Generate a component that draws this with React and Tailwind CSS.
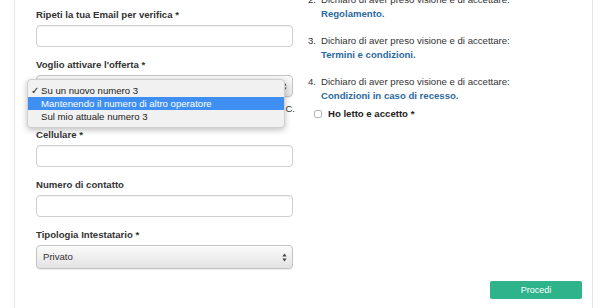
import React from 'react';

const font = { fontFamily: '"Liberation Sans", Arial, Helvetica, sans-serif' };

function Label({ children }) {
  return <div className="text-[9.6px] font-bold leading-[14px] text-[#333] mb-[3px]">{children}</div>;
}

function TextInput() {
  return <div className="h-[22px] rounded-[4px] border border-[#cfcfcf] bg-white shadow-[inset_0_1px_1px_rgba(0,0,0,0.06)]"></div>;
}

function Arrows() {
  return (
    <svg width="5" height="9" viewBox="0 0 5 9" className="text-[#444]">
      <path d="M2.5 0.5 L4.6 3.4 L0.4 3.4 Z" fill="currentColor" />
      <path d="M2.5 8.5 L4.6 5.6 L0.4 5.6 Z" fill="currentColor" />
    </svg>
  );
}

function Select({ value, height = 'h-[22px]' }) {
  return (
    <div className={`${height} flex items-center justify-between rounded-[4px] border border-[#c4c4c4] bg-gradient-to-b from-[#fbfbfb] to-[#e3e3e3] pl-[6px] pr-[5px] shadow-[0_1px_1px_rgba(0,0,0,0.08)]`}>
      <span className="text-[9.6px] text-[#333]">{value}</span>
      <Arrows />
    </div>
  );
}

function Clause({ n, link }) {
  return (
    <li className="flex text-[9.6px] leading-[14px] text-[#333]">
      <span className="w-[13px] shrink-0 text-right mr-[5px]">{n}.</span>
      <div>
        <div>Dichiaro di aver preso visione e di accettare:</div>
        <a className="font-bold text-[#2b6aa0]">{link}</a>
      </div>
    </li>
  );
}

export default function App() {
  const options = ['Su un nuovo numero 3', 'Mantenendo il numero di altro operatore', 'Sul mio attuale numero 3'];

  return (
    <div className="min-h-screen bg-white overflow-hidden" style={font}>
      <div className="ml-[14px] w-[579px] min-h-[308px] border-x border-[#e6e6e6] bg-white relative">
        <div className="flex pt-[8px]">
          {/* left form column */}
          <div className="ml-[21px] w-[257px] shrink-0">
            <Label>Ripeti la tua Email per verifica *</Label>
            <TextInput />

            <div className="mt-[11px]">
              <Label>Voglio attivare l'offerta *</Label>
              <Select value="Su un nuovo numero 3" />
              <div className="mt-[5px] whitespace-nowrap text-right text-[9.6px] leading-[14px] text-[#333] -mr-[2px]">
                Scopri i dettagli dell'offerta e le relative T. &amp; C.
              </div>
            </div>

            <div className="mt-[12px]">
              <Label>Cellulare *</Label>
              <TextInput />
            </div>

            <div className="mt-[11px]">
              <Label>Numero di contatto</Label>
              <TextInput />
            </div>

            <div className="mt-[11px]">
              <Label>Tipologia Intestatario *</Label>
              <Select value="Privato" height="h-[24px]" />
            </div>
          </div>

          {/* right terms column */}
          <div className="ml-[10px] -mt-[15px]">
            <ol className="flex flex-col gap-[13px]">
              <Clause n={2} link="Regolamento." />
              <Clause n={3} link="Termini e condizioni." />
              <Clause n={4} link="Condizioni in caso di recesso." />
            </ol>
            <label className="mt-[4px] ml-[11px] flex items-center gap-[6px]">
              <span className="w-[8px] h-[8px] rounded-[2px] border border-[#b5b5b5] bg-white"></span>
              <span className="text-[9.6px] font-bold text-[#222]">Ho letto e accetto *</span>
            </label>
          </div>
        </div>

        <div className="flex justify-end pr-[10px] mt-[12px]">
          <button className="w-[92px] h-[18px] rounded-[2px] bg-[#2fb38b] text-[9px] text-white leading-[18px]">Procedi</button>
        </div>

        {/* open native dropdown */}
        <div className="absolute left-[12px] top-[79px] w-[258px] rounded-[4px] border border-[#cfcfcf] bg-[#f1f1f1] py-[4px] shadow-[0_2px_6px_rgba(0,0,0,0.25)]">
          {options.map((o, i) => (
            <div
              key={o}
              className={`relative h-[13px] pl-[13px] text-[9.6px] leading-[13px] ${i === 1 ? 'bg-[#3f8ff3] text-white' : 'text-[#222]'}`}
            >
              {i === 0 && <span className="absolute left-[3px] top-0">✓</span>}
              {o}
            </div>
          ))}
        </div>
      </div>
    </div>
  );
}
